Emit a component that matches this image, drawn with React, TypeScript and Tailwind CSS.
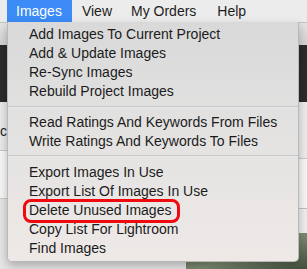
import React from "react";

const groups: string[][] = [
  ["Add Images To Current Project", "Add & Update Images", "Re-Sync Images", "Rebuild Project Images"],
  ["Read Ratings And Keywords From Files", "Write Ratings And Keywords To Files"],
  ["Export Images In Use", "Export List Of Images In Use", "Delete Unused Images", "Copy List For Lightroom", "Find Images"],
];

export default function App() {
  return (
    <div className="relative w-[307px] h-[269px] overflow-hidden bg-[#dcdcdc] font-['Liberation_Sans',Arial,sans-serif] text-[14px] leading-none">
      {/* Menu bar */}
      <div className="flex h-[22px] items-stretch bg-[#ececec] pl-[7px] text-[#1c1c1c]">
        <div className="flex items-center bg-[#3c8bf6] pl-[9px] pr-[10px] text-white">Images</div>
        <div className="flex items-center pl-[10px] pr-[10px]">View</div>
        <div className="flex items-center pl-[9px] pr-[11px]">My Orders</div>
        <div className="flex items-center pl-[10px] pr-[10px]">Help</div>
      </div>

      {/* App content behind the menu */}
      <div className="flex flex-col">
        <div className="h-[23px] border-t border-[#c4c4c4] bg-gradient-to-b from-[#e4e4e4] to-[#d2d2d2]" />
        <div className="h-[57px] bg-[#2b2b2b]" />
        <div className="flex">
          <div className="flex w-[186px] flex-col">
            <div className="flex h-[48px] items-center bg-[#e9e9e9] pt-[10px]">
              <span className="text-[#222]">ch</span>
            </div>
            <div className="h-[1px] bg-[#c8c8c8]" />
            <div className="h-[47px] bg-[#f7f7f7]" />
            <div className="h-[1px] bg-[#c8c8c8]" />
            <div className="h-[80px] bg-[#e6e6e6]" />
          </div>
          <div className="flex flex-1 flex-col">
            <div className="h-[56px] bg-[#ececec]" />
            <div className="h-[1px] bg-[#c8c8c8]" />
            <div className="h-[49px] bg-[#f6f6f6]" />
            <div className="h-[1px] bg-[#c0c0c0]" />
            <div className="h-[24px] bg-[#eeeeee]" />
            <div className="h-[40px] bg-gradient-to-br from-[#5b6b55] via-[#7d8a70] to-[#3f4a3a]" />
          </div>
        </div>
      </div>

      {/* Dropdown menu */}
      <div className="absolute left-[7px] top-[22px] flex h-[240px] w-[292px] flex-col rounded-b-[5px] border border-t-0 border-[#b9b9b9] bg-gradient-to-b from-[#d9d9d9] via-[#e4e3e2] to-[#eee9e7] pb-[4px] pt-[3px] text-[#1b1b1b] shadow-[0_4px_10px_rgba(0,0,0,0.25)]">
        {groups.map((g, gi) => (
          <React.Fragment key={gi}>
            {gi > 0 && (
              <div className="flex h-[12px] flex-col justify-center">
                <div className="h-[1px] bg-[#c6c6c6]" />
                <div className="h-[1px] bg-[#e9e9e9]" />
              </div>
            )}
            {g.map((item) => (
              <div key={item} className="flex h-[19px] items-center pl-[21px]">
                {item}
              </div>
            ))}
          </React.Fragment>
        ))}
        <div className="absolute left-[15px] top-[177px] h-[24px] w-[157px] rounded-[8px] border-[3px] border-[#ee0a0f]" />
      </div>
    </div>
  );
}
